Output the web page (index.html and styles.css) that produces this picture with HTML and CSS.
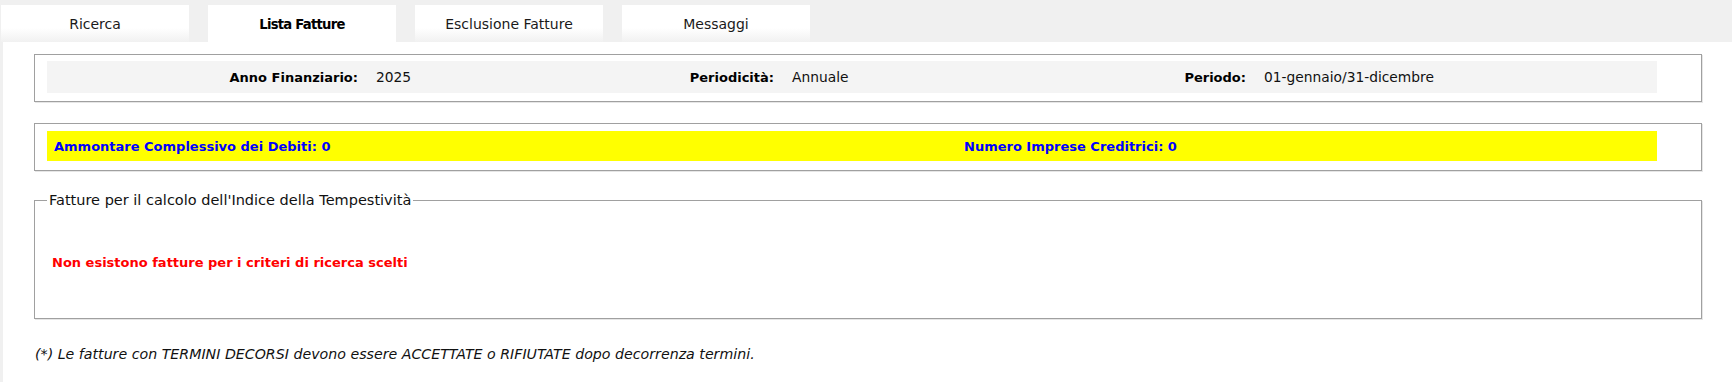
FILE: index.html
```html
<!DOCTYPE html>
<html lang="it">
<head>
<meta charset="utf-8">
<title>Lista Fatture</title>
<link rel="stylesheet" href="styles.css">
</head>
<body>
<nav class="tabbar">
  <div class="tab">Ricerca</div>
  <div class="tab tab-active">Lista Fatture</div>
  <div class="tab">Esclusione Fatture</div>
  <div class="tab">Messaggi</div>
</nav>
<main class="content">
  <section class="box box-info">
    <div class="info-row">
      <span class="lbl">Anno Finanziario:</span>
      <span class="val">2025</span>
      <span class="lbl">Periodicità:</span>
      <span class="val">Annuale</span>
      <span class="lbl">Periodo:</span>
      <span class="val">01-gennaio/31-dicembre</span>
    </div>
  </section>
  <section class="box box-totals">
    <div class="totals-row">
      <span class="tot">Ammontare Complessivo dei Debiti: 0</span>
      <span class="tot">Numero Imprese Creditrici: 0</span>
    </div>
  </section>
  <fieldset class="box box-list">
    <legend class="legend">Fatture per il calcolo dell'Indice della Tempestività</legend>
    <p class="empty">Non esistono fatture per i criteri di ricerca scelti</p>
  </fieldset>
  <p class="note">(*) Le fatture con TERMINI DECORSI devono essere ACCETTATE o RIFIUTATE dopo decorrenza termini.</p>
</main>
</body>
</html>
```

FILE: styles.css
```css
html, body {
  margin: 0;
  padding: 0;
  background: #ffffff;
}
body {
  font-family: "DejaVu Sans", "Liberation Sans", sans-serif;
  font-size: 14px;
  color: #111111;
}
.tabbar {
  display: flex;
  gap: 19px;
  height: 42px;
  box-sizing: border-box;
  padding: 5px 0 0 1px;
  background: #f0f0f0;
}
.tab {
  width: 188px;
  height: 37px;
  box-sizing: border-box;
  padding-top: 11px;
  text-align: center;
  line-height: 17px;
  font-size: 14px;
  background: linear-gradient(to bottom, #ffffff 0%, #ffffff 62%, #f1f1f1 100%);
  color: #1a1a1a;
}
.tab-active {
  background: #ffffff;
  font-weight: bold;
  font-size: 13.2px;
  letter-spacing: -0.75px;
  color: #000000;
}
.content {
  border-left: 3px solid #f0f0f0;
  padding: 12px 30px 20px 31px;
}
.box {
  border: 1px solid #a0a0a0;
  box-shadow: 1px 1px 0 #e6e6e6;
  background: #ffffff;
  margin: 0;
}
.box-info {
  padding: 6px 44px 8px 12px;
}
.info-row {
  display: grid;
  grid-template-columns: 311px 217px 199px 218px 254px 1fr;
  height: 32px;
  align-items: center;
  background: #f4f4f4;
  font-size: 13px;
}
.lbl {
  text-align: right;
  font-weight: bold;
  color: #000;
}
.val {
  padding-left: 18px;
  font-size: 13.8px;
  color: #111;
}
.box-totals {
  margin-top: 21px;
  padding: 7px 44px 9px 12px;
}
.totals-row {
  display: grid;
  grid-template-columns: 910px 1fr;
  height: 30px;
  align-items: center;
  background: #ffff00;
  font-size: 13px;
  font-weight: bold;
  color: #0000ff;
}
.tot {
  padding-left: 7px;
}
.box-list {
  margin-top: 20px;
  padding: 0 12px 0 12px;
  min-inline-size: 0;
}
.legend {
  padding: 0 2px;
  line-height: 18px;
  font-size: 14.5px;
  color: #111;
}
.empty {
  margin: 45px 0 46px 5px;
  line-height: 18px;
  font-size: 13px;
  font-weight: bold;
  color: #ff0000;
}
.note {
  margin: 26px 0 0 1px;
  line-height: 18px;
  font-size: 14.2px;
  font-style: italic;
  color: #111;
}
```
